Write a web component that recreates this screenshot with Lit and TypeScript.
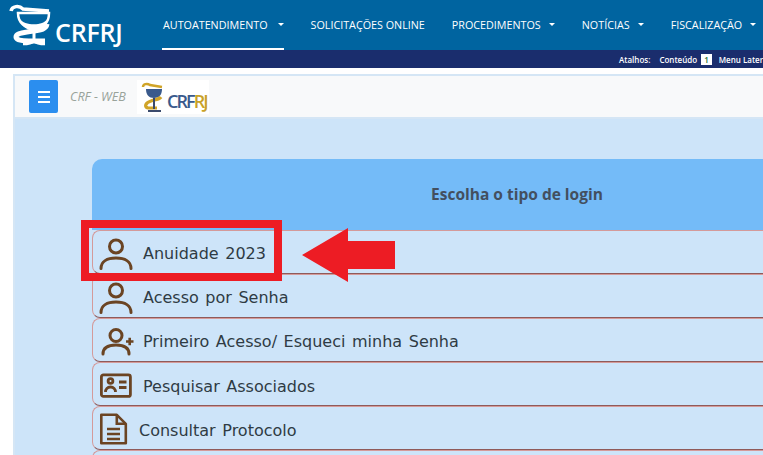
import { LitElement, html, css } from "lit";
import { customElement } from "lit/decorators.js";

const c = "#6b4423";
const icons: Record<string, any> = {
  user: html`<svg class="ic" width="36" height="36" viewBox="0 0 36 36" fill="none" stroke="${c}" stroke-width="3"><circle cx="18" cy="12.500" r="6.500"/><path d="M3 34.500c0-7 6-10.500 15-10.500s15 3.500 15 10.500" stroke-linecap="round"/></svg>`,
  plus: html`<svg class="ic" width="36" height="36" viewBox="0 0 36 36" fill="none" stroke="${c}" stroke-width="3"><circle cx="18" cy="13.500" r="6"/><path d="M5 32c0-6 5-9 13-9s13 3 13 9" stroke-linecap="round"/><path d="M28 19.500h7.500M31.700 15.800v7.500" stroke-width="2.600"/></svg>`,
  card: html`<svg class="ic" width="36" height="36" viewBox="0 0 36 36" fill="none" stroke="${c}" stroke-width="2.800"><rect x="3.400" y="8.900" width="29" height="21.500" rx="2"/><circle cx="12.500" cy="15" r="2.400"/><path d="M7.500 26c0-3 2-5 5-5s5 2 5 5"/><path d="M21 16h7.500M21 21.500h7.500"/></svg>`,
  doc: html`<svg class="ic" width="32" height="36" viewBox="0 0 32 36" fill="none" stroke="${c}" stroke-width="2.600"><path d="M3.300 4.800h15.500l9 9v19.500H3.300z" stroke-linejoin="round"/><path d="M18.800 4.800v9h9"/><path d="M9 19h13M9 24h13M9 29h13"/></svg>`,
};

@customElement("app-root")
export class AppRoot extends LitElement {
  static styles = css`
    :host { display: block; width: 763px; height: 455px; overflow: hidden; position: relative; background: #fff; font-family: "DejaVu Sans", sans-serif; }
    .top { height: 50px; background: #0064a0; display: flex; align-items: stretch; white-space: nowrap; color: #fff; font: 10.750px "Open Sans", sans-serif; }
    .brand { width: 150px; flex: none; position: relative; }
    .brand svg { position: absolute; left: 9px; top: 4px; }
    .brand b { font: 600 25px "Open Sans", sans-serif; letter-spacing: -.2px; position: absolute; left: 55px; top: 15px; }
    .menu { display: flex; padding-left: 12px; gap: 26px; }
    .menu a { display: flex; align-items: center; height: 50px; box-sizing: border-box; gap: 8px; padding: 0 0 1px 1px; }
    .menu a.on { border-bottom: 2px solid #fff; padding: 1px 0 0 1px; gap: 10px; }
    .caret { width: 0; height: 0; border: 3.500px solid transparent; border-top-color: #fff; border-bottom: 0; }
    .short { height: 18px; background: #1a2d6d; color: #fff; font: 600 8px "Open Sans", sans-serif; display: flex; align-items: center; padding-left: 619px; white-space: nowrap; }
    .short .gap { margin-left: 9px; }
    .short i { font-style: normal; background: #fff; color: #1a6d2d; padding: 0 3px; margin: 0 7px 0 4px; }
    .gapw { height: 6px; }
    .page { margin-left: 13px; height: 381px; background: #cde4f9; border-left: 2px solid #d5e6f5; border-top: 2px solid #d5e6f5; overflow: hidden; }
    .bar { height: 41px; background: #f8f9fa; display: flex; align-items: center; border-bottom: 2px solid #d5e6f5; }
    .burger { width: 29px; height: 33px; background: #2b8eef; border-radius: 2px; margin-left: 14px; display: flex; flex-direction: column; gap: 3px; align-items: center; justify-content: center; }
    .burger span { display: block; width: 12px; height: 2px; background: #fff; }
    .crf { font: italic 12.600px "Open Sans", sans-serif; color: #99a39a; margin-left: 12px; }
    .logo2 { width: 72px; height: 34px; background: #fff; margin-left: 11px; position: relative; }
    .logo2 svg { position: absolute; left: 3px; top: 0; }
    .logo2 b { font: 600 18px "Open Sans", sans-serif; letter-spacing: -1.900px; color: #3a5a8c; position: absolute; left: 30px; top: 9px; }
    .logo2 b em { font-style: normal; color: #c9a227; }
    .card { margin: 40px 0 0 77px; width: 850px; }
    .head { height: 71px; box-sizing: border-box; padding-bottom: 2px; background: #74bbf8; border-radius: 10px 10px 0 0; display: flex; align-items: center; justify-content: center; font: 700 15.500px "Open Sans", sans-serif; color: #434f5f; }
    .row { height: 44px; box-sizing: border-box; border: 1px solid #d49a9a; border-bottom: 1px solid #8f5a5a; border-right: 0; border-radius: 8px 0 0 8px; display: flex; align-items: center; padding-left: 5px; color: #2f3b44; font-size: 16px; white-space: nowrap; word-spacing: 1.500px; }
    .row:first-of-type { margin-top: 1px; }
    .ic { flex: none; }
    .row span { margin-left: 9px; padding-top: 2px; }
    .row.low span { padding-top: 4px; }
    .mark { position: absolute; left: 81px; top: 220px; width: 201px; height: 61px; box-sizing: border-box; border: 8px solid #ed1c24; }
    .arrow { position: absolute; left: 302px; top: 228px; }
  `;
  render() {
    const rows = [
      ["user", "Anuidade 2023", ""],
      ["user", "Acesso por Senha", ""],
      ["plus", "Primeiro Acesso/ Esqueci minha Senha", ""],
      ["card", "Pesquisar Associados", "low"],
      ["doc", "Consultar Protocolo", "low"],
      ["", "", ""],
    ];
    return html`
      <div class="top">
        <div class="brand">
          <svg width="44" height="42" viewBox="0 0 44 42" fill="none" stroke="#fff">
            <path d="M2 7c1-5 8-6 12-2l26 2" stroke-width="3.500"/>
            <path d="M9 9h31c0 10-6 15-15 15S9 19 9 9z" stroke-width="2.500"/>
            <path d="M11 15c4 7 24 7 27 0c-1 8-6 11-13 11c-7 0-13-3-14-11z" fill="#fff" stroke="none"/>
            <path d="M38 20c-1 7-10 6-20 8c-7 1-11 2-11 5s5 4 13 4h16" stroke-width="5"/>
            <path d="M25 24v14" stroke-width="3"/>
            <path d="M14 40c5 0 9-1 11-3c2 2 6 3 11 3" stroke-width="2.500"/>
          </svg>
          <b>CRFRJ</b>
        </div>
        <nav class="menu">
          <a class="on">AUTOATENDIMENTO <span class="caret"></span></a>
          <a>SOLICITAÇÕES ONLINE</a>
          <a>PROCEDIMENTOS <span class="caret"></span></a>
          <a>NOTÍCIAS <span class="caret"></span></a>
          <a>FISCALIZAÇÃO <span class="caret"></span></a>
        </nav>
      </div>
      <div class="short">Atalhos:<span class="gap">Conteúdo</span> <i>1</i> Menu Lateral</div>
      <div class="gapw"></div>
      <div class="page">
        <div class="bar">
          <div class="burger"><span></span><span></span><span></span></div>
          <div class="crf">CRF - WEB</div>
          <div class="logo2">
            <svg width="27" height="34" viewBox="0 0 27 34" fill="none">
              <path d="M3 7c0-3 4-4 7-2l12 2" stroke="#d0a428" stroke-width="2.500"/>
              <path d="M6 9h16c0 6-3 9-8 9S6 15 6 9z" fill="#3a5a8c"/>
              <path d="M21 17c-2 3-6 2-10 4c-6 2-7 6-3 7l9 0" stroke="#d0a428" stroke-width="3.200"/>
              <path d="M14 18v11M8 31h13" stroke="#3a4a6c" stroke-width="2"/>
            </svg>
            <b>CRF<em>RJ</em></b>
          </div>
        </div>
        <div class="card">
          <div class="head">Escolha o tipo de login</div>
          ${rows.map(([i, t, k]) => html`<div class="row ${k}">${icons[i]}<span>${t}</span></div>`)}
        </div>
      </div>
      <div class="mark"></div>
      <svg class="arrow" width="94" height="54" viewBox="0 0 94 54"><path d="M0 27 46 0V13H93V41H46V54z" fill="#ed1c24"/></svg>
    `;
  }
}
